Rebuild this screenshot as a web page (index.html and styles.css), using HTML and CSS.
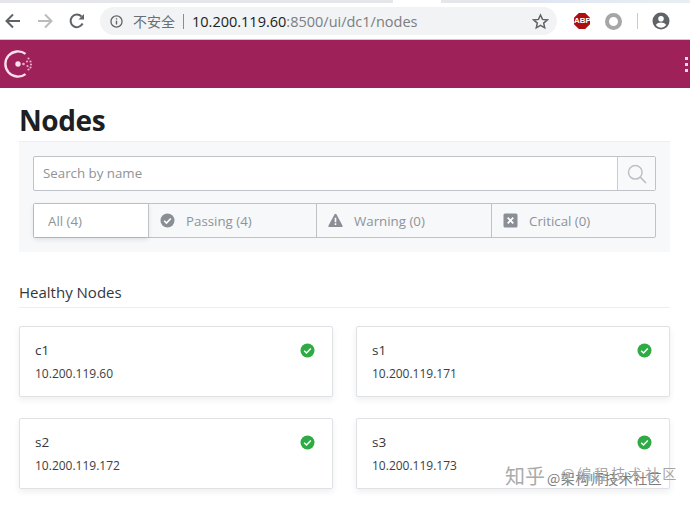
FILE: index.html
```html
<!DOCTYPE html>
<html lang="en">
<head>
<meta charset="utf-8">
<title>Nodes</title>
<link rel="stylesheet" href="styles.css">
</head>
<body>
<div class="tabstrip"></div>
<header class="chrome">
  <svg class="nav nav-back" width="20" height="20" viewBox="0 0 20 20"><path d="M17 10H4M10 3.500L3.500 10l6.500 6.500" fill="none" stroke="#5f6368" stroke-width="2"/></svg>
  <svg class="nav nav-fwd" width="20" height="20" viewBox="0 0 20 20"><path d="M3 10h13M10 3.500l6.500 6.500-6.500 6.500" fill="none" stroke="#b9bbbe" stroke-width="2"/></svg>
  <svg class="nav nav-reload" width="20" height="20" viewBox="0 0 20 20"><path d="M15.600 12.500A6.300 6.300 0 1 1 14.500 5.500" fill="none" stroke="#5f6368" stroke-width="2"/><path d="M11.500 8.500H17V3z" fill="#5f6368"/></svg>
  <div class="omnibox">
    <svg class="info" width="13" height="13" viewBox="0 0 15 15"><circle cx="7.500" cy="7.500" r="6.400" fill="none" stroke="#5f6368" stroke-width="1.500"/><path d="M7.500 6.500v4.500M7.500 3.700v1.600" stroke="#5f6368" stroke-width="1.600"/></svg>
    <span class="insecure">不安全</span>
    <span class="sep"></span>
    <span class="url"><span class="host">10.200.119.60</span>:8500/ui/dc1/nodes</span>
    <svg class="star" width="17" height="17" viewBox="0 0 17 17"><path d="M8.500 2l2 4.400 4.800.5-3.600 3.200 1 4.700-4.200-2.400-4.200 2.400 1-4.700L1.700 6.900l4.800-.5z" fill="none" stroke="#5f6368" stroke-width="1.500"/></svg>
  </div>
  <div class="extensions">
    <span class="abp">ABP</span>
    <span class="ring"></span>
    <span class="divider"></span>
    <svg width="18" height="18" viewBox="0 0 18 18"><circle cx="9" cy="9" r="8.500" fill="#5f6368"/><circle cx="9" cy="6.700" r="2.800" fill="#fff"/><path d="M3.800 13c1.300-2 3.300-2.600 5.200-2.600s3.900.6 5.200 2.600A6.600 6.600 0 0 1 9 15.700 6.600 6.600 0 0 1 3.800 13z" fill="#fff"/></svg>
  </div>
</header>
<nav class="appbar">
  <svg class="logo" width="30" height="30" viewBox="0 0 30 30">
    <path d="M22.500 4.900A12.600 12.600 0 1 0 22.500 25.100" fill="none" stroke="#fbdfec" stroke-width="2.400"/>
    <circle cx="15" cy="15" r="2.700" fill="#fbdfec"/>
    <g fill="#f3a9cd"><circle cx="20.500" cy="15" r="1.300"/><circle cx="25.500" cy="9.500" r="1.100"/><circle cx="24" cy="12.500" r="1.100"/><circle cx="27.500" cy="12.500" r="1.100"/><circle cx="28" cy="15.500" r="1.100"/><circle cx="24.500" cy="17" r="1.100"/><circle cx="27.500" cy="18.500" r="1.100"/><circle cx="25.500" cy="20.500" r="1.100"/></g>
  </svg>
  <div class="menu-dots"><i></i><i></i><i></i></div>
</nav>
<main class="content">
  <h1>Nodes</h1>
  <section class="filters">
    <div class="search">
      <span class="search-input">Search by name</span>
      <span class="search-btn">
        <svg width="20" height="20" viewBox="0 0 20 20"><circle cx="8.300" cy="8.300" r="6.800" fill="none" stroke="#bcc1c7" stroke-width="1.500"/><path d="M13.200 13.200l5.800 5.800" stroke="#bcc1c7" stroke-width="1.700"/></svg>
      </span>
    </div>
    <div class="tabs">
      <div class="tab tab-all">All (4)</div>
      <div class="tab">
        <svg width="15" height="15" viewBox="0 0 15 15"><circle cx="7.500" cy="7.500" r="7" fill="#8a8f96"/><path d="M4.200 7.700l2.300 2.300 4.300-4.500" fill="none" stroke="#fff" stroke-width="1.600"/></svg>
        Passing (4)
      </div>
      <div class="tab">
        <svg width="15" height="15" viewBox="0 0 15 15"><path d="M7.500.8c.4 0 .7.200.9.500l6.200 11.400c.3.600-.1 1.300-.8 1.300H1.200c-.7 0-1.100-.7-.8-1.300L6.600 1.300c.2-.3.500-.5.900-.5z" fill="#8a8f96"/><path d="M7.500 4.800v4.400M7.500 10.300v1.700" stroke="#fff" stroke-width="1.600"/></svg>
        Warning (0)
      </div>
      <div class="tab">
        <svg width="15" height="15" viewBox="0 0 15 15"><rect x=".5" y=".5" width="14" height="14" rx="1.500" fill="#8a8f96"/><path d="M4.700 4.700l5.600 5.600M10.300 4.700l-5.600 5.600" stroke="#fff" stroke-width="1.800"/></svg>
        Critical (0)
      </div>
    </div>
  </section>
  <h2>Healthy Nodes</h2>
  <ul class="grid">
    <li class="card"><div><div class="name">c1</div><div class="addr">10.200.119.60</div></div><svg width="15" height="15" viewBox="0 0 15 15"><circle cx="7.500" cy="7.500" r="7" fill="#2eab44"/><path d="M4.200 7.700l2.300 2.300 4.300-4.500" fill="none" stroke="#fff" stroke-width="1.500"/></svg></li>
    <li class="card"><div><div class="name">s1</div><div class="addr">10.200.119.171</div></div><svg width="15" height="15" viewBox="0 0 15 15"><circle cx="7.500" cy="7.500" r="7" fill="#2eab44"/><path d="M4.200 7.700l2.300 2.300 4.300-4.500" fill="none" stroke="#fff" stroke-width="1.500"/></svg></li>
    <li class="card"><div><div class="name">s2</div><div class="addr">10.200.119.172</div></div><svg width="15" height="15" viewBox="0 0 15 15"><circle cx="7.500" cy="7.500" r="7" fill="#2eab44"/><path d="M4.200 7.700l2.300 2.300 4.300-4.500" fill="none" stroke="#fff" stroke-width="1.500"/></svg></li>
    <li class="card"><div><div class="name">s3</div><div class="addr">10.200.119.173</div></div><svg width="15" height="15" viewBox="0 0 15 15"><circle cx="7.500" cy="7.500" r="7" fill="#2eab44"/><path d="M4.200 7.700l2.300 2.300 4.300-4.500" fill="none" stroke="#fff" stroke-width="1.500"/></svg></li>
  </ul>
</main>
<div class="watermark"><span class="wm-big">知乎</span><span class="wm-small">@架构师技术社区</span><span class="wm-over">@编程技术社区</span></div>
</body>
</html>
```

FILE: styles.css
```css
* { box-sizing: border-box; }
html, body { margin: 0; height: 505px; overflow: hidden; background: #fff; }
body { position: relative; font-family: "Open Sans", "Noto Sans CJK SC", sans-serif; color: #212326; }

.tabstrip { height: 3px; background: linear-gradient(90deg, #e4e6e9 0, #e4e6e9 393px, #fff 393px, #fff 441px, #e4e6e9 441px, #e4e6e9 530px, #dfe6f2 530px, #e8eff4 100%); }
.chrome { height: 37px; display: flex; align-items: center; background: #fff; padding-left: 3px; border-bottom: 1px solid #d9c3cd; }
.nav { flex: none; margin-right: 12px; }
.nav-reload { margin-right: 13px; }
.omnibox { width: 457px; height: 28px; padding: 0 8px 0 10px; background: #f1f3f4; border-radius: 14px; display: flex; align-items: center; }
.info { flex: none; }
.insecure { margin-left: 10px; color: #6b6e72; font-size: 14px; font-family: "Noto Sans CJK SC", sans-serif; }
.sep { width: 1px; height: 15px; background: #8a8d90; margin: 0 8px; }
.url { color: #7b7e82; font-size: 14.5px; flex: 1; white-space: nowrap; }
.host { color: #202124; }
.star { flex: none; }
.extensions { display: flex; align-items: center; margin-left: 17px; }
.abp { width: 16px; height: 16px; clip-path: polygon(30% 0, 70% 0, 100% 30%, 100% 70%, 70% 100%, 30% 100%, 0 70%, 0 30%); background: #ae0e12; color: #fff; font: 700 8px/16px "Liberation Sans", sans-serif; text-align: center; }
.ring { width: 17px; height: 17px; border: 4px solid #a6a6a6; border-radius: 50%; margin-left: 15px; }
.divider { width: 1px; height: 16px; background: #ccc; margin: 0 14px 0 15px; }

.appbar { height: 48px; background: #9e2159; display: flex; align-items: center; justify-content: space-between; padding: 0 2px 0 3px; }
.menu-dots { display: flex; flex-direction: column; gap: 3px; }
.menu-dots i { width: 3px; height: 3px; background: #f7d6e6; display: block; }

.content { padding: 0 20px 0 19px; }
h1 { margin: 0; padding-top: 14px; height: 53px; font-size: 28px; line-height: 37px; font-weight: 700; letter-spacing: -.4px; color: #1d1f23; }
.filters { background: #f6f8fa; border-top: 1px solid #eceef0; height: 111px; padding: 14px 14px 0; }
.search { display: flex; height: 35px; background: #fff; border: 1px solid #bfc3c8; border-radius: 2px; }
.search-input { flex: 1; padding-left: 9px; font-size: 13.300px; line-height: 33px; color: #8f9398; }
.search-btn { width: 38px; background: #f8f9fa; border-left: 1px solid #c9ccd0; display: flex; align-items: center; justify-content: center; }
.tabs { display: grid; grid-template-columns: 114px 168px 175px 164px; height: 35px; margin-top: 12px; border: 1px solid #bfc3c8; border-radius: 2px; }
.tab { display: flex; align-items: center; gap: 11px; padding-left: 11px; border-left: 1px solid #bfc3c8; font-size: 13.300px; color: #8f9398; white-space: nowrap; }
.tab-all { border-left: 0; background: #fff; padding-left: 14px; box-shadow: 0 2px 5px rgba(40, 50, 60, .14); }
h2 { margin: 0; height: 56px; padding-top: 30px; border-bottom: 1px solid #eceef0; font-size: 15px; line-height: 20px; font-weight: 500; color: #34373b; }
.grid { list-style: none; margin: 18px 0 0; padding: 0; display: grid; grid-template-columns: 314px 314px; column-gap: 23px; row-gap: 21px; }
.card { height: 71px; border: 1px solid #dfe1e4; border-radius: 2px; background: #fff; box-shadow: 0 3px 6px rgba(40, 50, 60, .08); padding: 14px 17px 0 15px; display: flex; justify-content: space-between; align-items: flex-start; }
.card svg { margin-top: 2px; }
.name { font-size: 13.500px; line-height: 18px; color: #33363a; }
.addr { font-size: 12px; line-height: 16px; margin-top: 7px; color: #3b3e42; }

.watermark { position: absolute; left: 505px; top: 463px; display: flex; align-items: baseline; color: #7d7d7d; white-space: nowrap; font-family: "Noto Sans CJK SC", sans-serif; line-height: 26px; }
.wm-big { font-size: 20px; color: #aaa; margin-right: 2px; }
.wm-small { font-size: 14px; letter-spacing: .5px; }
.wm-over { position: absolute; left: 56px; top: -3px; font-size: 14px; letter-spacing: 3px; color: #a5a5a5; }
```
